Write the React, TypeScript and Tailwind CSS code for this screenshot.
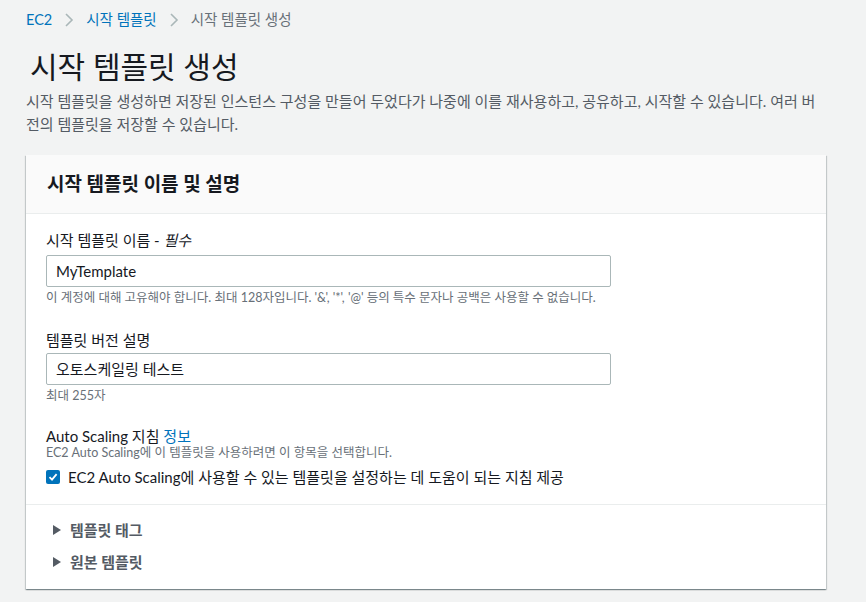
import React from "react";

const font = { fontFamily: 'Lato, "Noto Sans CJK KR", sans-serif' };

function Chevron() {
  return (
    <svg width="10" height="14" viewBox="0 0 10 14" className="mx-[12px] shrink-0">
      <polyline points="2,1 8,7 2,13" fill="none" stroke="#aab7b8" strokeWidth="1.6" />
    </svg>
  );
}

function Caret() {
  return (
    <svg width="8" height="10" viewBox="0 0 8 10" className="shrink-0">
      <polygon points="0,0 8,5 0,10" fill="#545b64" />
    </svg>
  );
}

export default function App() {
  return (
    <div className="min-h-[602px] w-[866px] bg-[#f2f3f3] text-[#16191f]" style={font}>
      <div className="px-[26px]">
        {/* Breadcrumbs */}
        <nav className="flex items-center pt-[10px] text-[14.5px] leading-[20px]">
          <span className="text-[#0073bb]">EC2</span>
          <Chevron />
          <span className="text-[#0073bb]">시작 템플릿</span>
          <Chevron />
          <span className="text-[#687078]">시작 템플릿 생성</span>
        </nav>

        {/* Heading */}
        <h1 className="mt-[18px] ml-[4px] text-[30px] leading-[36px] font-normal">시작 템플릿 생성</h1>
        <p className="mt-[6px] max-w-[796px] text-[15px] leading-[23px] text-[#545b64]">
          시작 템플릿을 생성하면 저장된 인스턴스 구성을 만들어 두었다가 나중에 이를 재사용하고, 공유하고, 시작할 수 있습니다. 여러
          버전의 템플릿을 저장할 수 있습니다.
        </p>

        {/* Card */}
        <div className="mt-[19px] w-[800px] bg-white shadow-[0_1px_1px_0_rgba(0,28,36,0.3),1px_1px_1px_0_rgba(0,28,36,0.15),-1px_1px_1px_0_rgba(0,28,36,0.15)]">
          <div className="border-b border-[#eaeded] bg-[#fafafa] px-[21px] py-[16px]">
            <h2 className="text-[19px] leading-[26px] font-bold">시작 템플릿 이름 및 설명</h2>
          </div>

          <div className="border-b border-[#eaeded] px-[20px] pt-[16px] pb-[17px]">
            <label className="block text-[15px] leading-[20px]">
              시작 템플릿 이름 - <i>필수</i>
            </label>
            <div className="mt-[5px] flex h-[32px] w-[565px] items-center rounded-[2px] border border-[#aab7b8] px-[9px] text-[15px]">
              MyTemplate
            </div>
            <p className="mt-[3px] text-[12.5px] leading-[16px] text-[#687078]">
              이 계정에 대해 고유해야 합니다. 최대 128자입니다. '&amp;', '*', '@' 등의 특수 문자나 공백은 사용할 수 없습니다.
            </p>

            <label className="mt-[24px] block text-[15px] leading-[20px]">템플릿 버전 설명</label>
            <div className="mt-[3px] flex h-[32px] w-[565px] items-center rounded-[2px] border border-[#aab7b8] px-[9px] text-[15px]">
              오토스케일링 테스트
            </div>
            <p className="mt-[3px] text-[12.5px] leading-[16px] text-[#687078]">최대 255자</p>

            <div className="mt-[23px] text-[15px] leading-[18px]">
              Auto Scaling 지침 <span className="text-[#0073bb]">정보</span>
            </div>
            <p className="text-[12.5px] leading-[16px] text-[#687078]">
              EC2 Auto Scaling에 이 템플릿을 사용하려면 이 항목을 선택합니다.
            </p>
            <div className="mt-[6px] flex items-center text-[15px] leading-[20px]">
              <span className="mr-[8px] flex h-[14px] w-[14px] items-center justify-center rounded-[2px] bg-[#0073bb]">
                <svg width="10" height="10" viewBox="0 0 10 10">
                  <polyline points="1.5,5.2 4,7.6 8.6,2.2" fill="none" stroke="white" strokeWidth="1.8" />
                </svg>
              </span>
              EC2 Auto Scaling에 사용할 수 있는 템플릿을 설정하는 데 도움이 되는 지침 제공
            </div>
          </div>

          <div className="px-[27px] pt-[15px] pb-[17px] text-[15px] leading-[20px] font-bold text-[#545b64]">
            <div className="flex items-center gap-[9px]">
              <Caret />
              템플릿 태그
            </div>
            <div className="mt-[12px] flex items-center gap-[9px]">
              <Caret />
              원본 템플릿
            </div>
          </div>
        </div>
      </div>
    </div>
  );
}
